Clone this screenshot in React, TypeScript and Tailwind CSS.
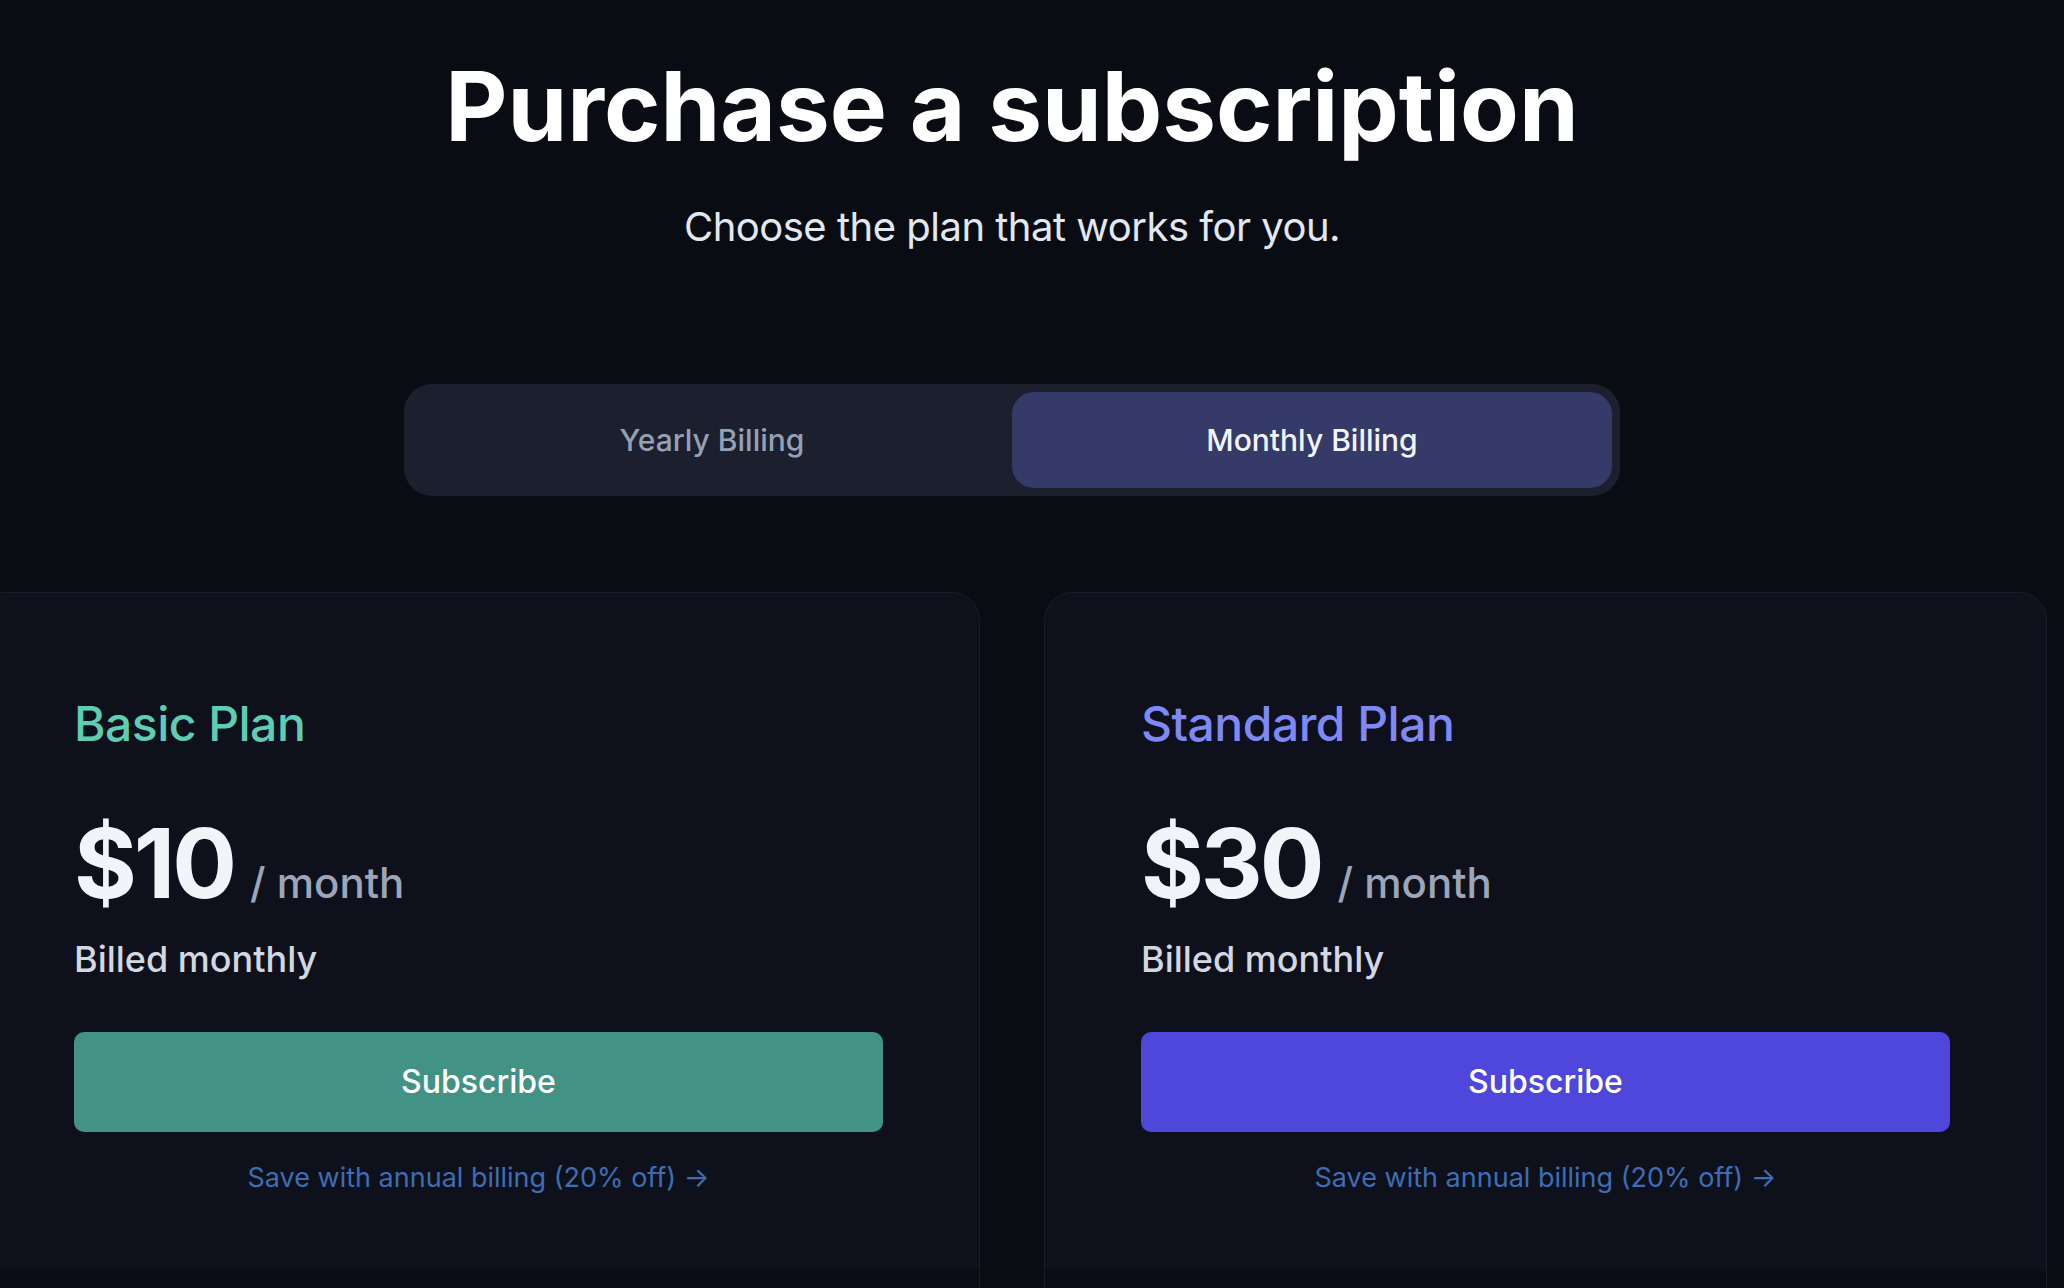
import { useState } from 'react';

type Plan = {
  name: string;
  price: string;
  nameColor: string;
  buttonColor: string;
};

const plans: Plan[] = [
  { name: 'Basic Plan', price: '$10', nameColor: 'text-[#5fcdb4]', buttonColor: 'bg-[#439286]' },
  { name: 'Standard Plan', price: '$30', nameColor: 'text-[#7f88f3]', buttonColor: 'bg-[#4f46dc]' },
];

function PlanCard({ plan }: { plan: Plan }) {
  return (
    <div className="w-[1003px] shrink-0 rounded-[28px] border border-[#1a1d29] bg-[#0e111c] overflow-hidden">
      <div className="px-[96px] pt-[107px]">
        <h2 className={`text-[48px] leading-none font-medium tracking-[-0.5px] ${plan.nameColor}`}>{plan.name}</h2>
        <div className="mt-[67px] flex items-baseline">
          <span className="text-[96px] leading-none font-bold tracking-[-3px] text-[#f1f5f9]">{plan.price}</span>
          <span className="ml-4 text-[42px] leading-none font-medium text-[#9ca6b8]">/ month</span>
        </div>
        <p className="mt-[30px] text-[36px] leading-none font-medium text-[#d3d8e0]">Billed monthly</p>
        <button
          className={`mt-[55px] h-[100px] w-full rounded-[10px] text-[32px] font-medium text-white ${plan.buttonColor}`}
        >
          Subscribe
        </button>
        <div className="mt-[32px] text-center text-[27px] leading-none text-[#3f6db3]">
          Save with annual billing (20% off) →
        </div>
      </div>
      <div className="mt-[78px] h-[200px] bg-[#0b0d16]" />
    </div>
  );
}

export default function App() {
  const [billing, setBilling] = useState<'yearly' | 'monthly'>('monthly');

  return (
    <div
      className="min-h-screen h-[1288px] overflow-hidden bg-[#0a0c14]"
      style={{ fontFamily: 'Inter, "Noto Sans", sans-serif' }}
    >
      <div className="w-[2024px] flex flex-col items-center">
        <h1 className="pt-[58px] text-[96px] leading-none font-bold tracking-[0px] text-white">
          Purchase a subscription
        </h1>
        <p className="mt-[53px] text-[40px] leading-none text-[#e2e8f0] tracking-[-0.5px]">
          Choose the plan that works for you.
        </p>

        <div className="mt-[137px] flex w-[1216px] rounded-[28px] bg-[#1c1f2e] p-2">
          <button
            onClick={() => setBilling('yearly')}
            className={`h-[96px] flex-1 rounded-[22px] text-[30px] font-medium ${
              billing === 'yearly' ? 'bg-[#363a68] text-[#f1f5f9]' : 'text-[#94a0b6]'
            }`}
          >
            Yearly Billing
          </button>
          <button
            onClick={() => setBilling('monthly')}
            className={`h-[96px] flex-1 rounded-[22px] text-[30px] font-medium ${
              billing === 'monthly' ? 'bg-[#363a68] text-[#f1f5f9]' : 'text-[#94a0b6]'
            }`}
          >
            Monthly Billing
          </button>
        </div>

        <div className="mt-[96px] flex w-full justify-center gap-[64px]">
          {plans.map((plan) => (
            <PlanCard key={plan.name} plan={plan} />
          ))}
        </div>
      </div>
    </div>
  );
}
